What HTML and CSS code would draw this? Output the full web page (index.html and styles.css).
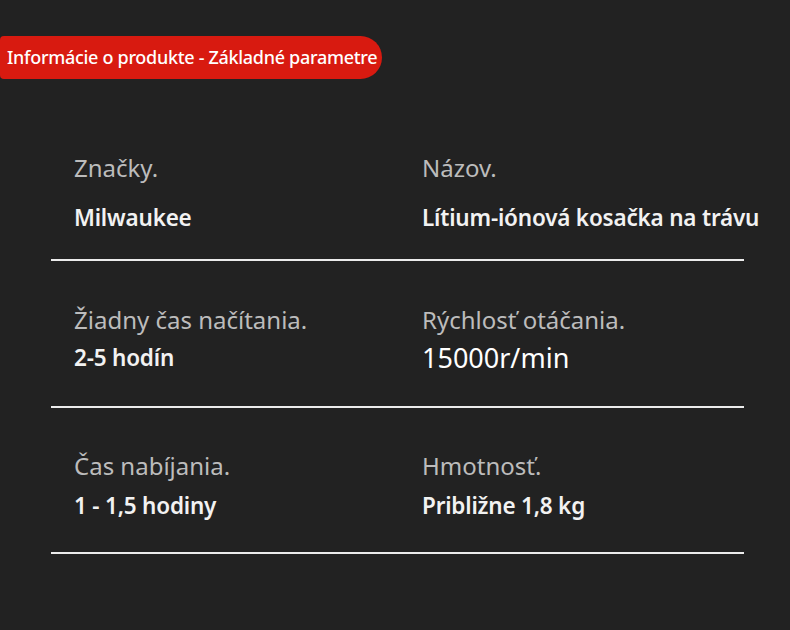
FILE: index.html
```html
<!DOCTYPE html>
<html lang="sk">
<head>
<meta charset="utf-8">
<link rel="stylesheet" href="styles.css">
</head>
<body>
<div class="badge">Informácie o produkte - Základné parametre</div>
<div class="specs">
  <div class="row row-first">
    <div class="cell"><div class="label">Značky.</div><div class="value">Milwaukee</div></div>
    <div class="cell"><div class="label">Názov.</div><div class="value">Lítium-iónová kosačka na trávu</div></div>
  </div>
  <div class="row row-mid">
    <div class="cell"><div class="label">Žiadny čas načítania.</div><div class="value">2-5 hodín</div></div>
    <div class="cell"><div class="label">Rýchlosť otáčania.</div><div class="value value-big">15000r/min</div></div>
  </div>
  <div class="row row-last">
    <div class="cell"><div class="label">Čas nabíjania.</div><div class="value">1 - 1,5 hodiny</div></div>
    <div class="cell"><div class="label">Hmotnosť.</div><div class="value">Približne 1,8 kg</div></div>
  </div>
</div>
</body>
</html>
```
FILE: styles.css
```css
html, body {
  margin: 0;
  padding: 0;
  background: #222222;
  font-family: "Noto Sans", "Open Sans", sans-serif;
}
body {
  width: 790px;
  height: 630px;
  overflow: hidden;
}
.badge {
  display: inline-block;
  margin-top: 36px;
  height: 43px;
  line-height: 42px;
  padding: 0 5px 0 7px;
  background: #d81a10;
  color: #ffffff;
  font-size: 18px;
  font-weight: 500;
  letter-spacing: -0.3px;
  border-radius: 4px 22px 22px 4px;
}
.specs {
  margin: 73px 0 0 51px;
  width: 693px;
}
.row {
  display: grid;
  grid-template-columns: 348px 1fr;
  padding-left: 23px;
  border-bottom: 2px solid #ececec;
}
.cell {
  min-width: 0;
  white-space: nowrap;
}
.row-first {
  padding-top: 0;
  padding-bottom: 25px;
}
.row-first .value {
  margin-top: 18px;
}
.row-mid {
  padding-top: 43px;
  padding-bottom: 32px;
}
.row-mid .value {
  margin-top: 6px;
}
.row-last {
  padding-top: 42px;
  padding-bottom: 30px;
}
.row-last .value {
  margin-top: 8px;
}
.label {
  color: #bcbcbc;
  font-size: 24px;
  line-height: 32px;
}
.value {
  color: #f2f2f2;
  font-size: 22.5px;
  font-weight: 600;
  line-height: 32px;
  letter-spacing: -0.2px;
}
.value-big {
  font-size: 27px;
  font-weight: 400;
  letter-spacing: 0;
  color: #ffffff;
}
```
